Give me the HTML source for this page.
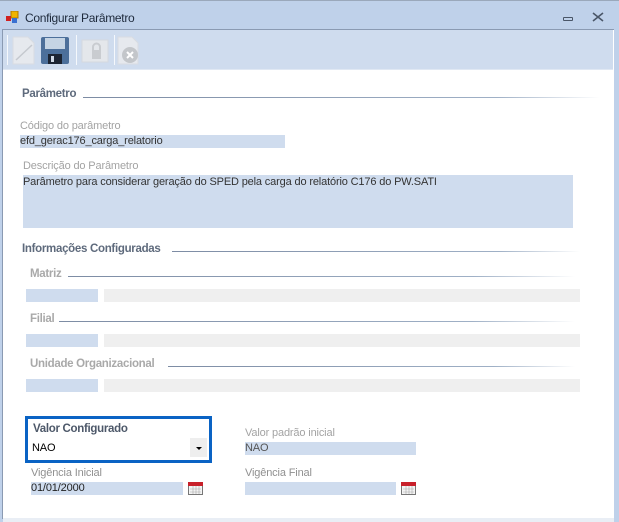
<!DOCTYPE html>
<html><head><meta charset="utf-8"><style>
*{margin:0;padding:0;box-sizing:border-box}
body{width:619px;height:522px;background:#bfd1ea;font-family:"Liberation Sans",sans-serif;font-size:11px;letter-spacing:-0.15px;position:relative;overflow:hidden;color:#000}
.a{position:absolute;white-space:nowrap}
.lbl{color:#a3a3a3}
.hd{font-weight:bold;color:#5e6a7c;font-size:11.5px;letter-spacing:-0.3px}
.hd2{font-weight:bold;color:#a9a9a9;font-size:11.5px;letter-spacing:-0.3px}
.ln{position:absolute;height:1px;background:linear-gradient(90deg,#7d8ca4,#9fb0c6 80%,rgba(255,255,255,0))}
.fb{position:absolute;background:#cfdcee}
.fg{position:absolute;background:#efefef}
</style></head><body>
<div class="a" style="left:0;top:0;width:619px;height:1px;background:#9aa8bb"></div>
<svg class="a" style="left:6px;top:11px" width="13" height="13"><rect x="5" y="0" width="7" height="7" fill="#f0b400" stroke="#b07800"/><rect x="0" y="5" width="5" height="5" fill="#d02020"/><rect x="6" y="7" width="5" height="5" fill="#3a70d0"/></svg>
<div class="a" style="left:25px;top:11px;color:#1e2a3c;font-size:12px;letter-spacing:-0.3px">Configurar Parâmetro</div>
<div class="a" style="left:563px;top:17px;width:10px;height:4px;border:1px solid #4a5668;border-radius:1px"></div>
<svg class="a" style="left:592px;top:12px" width="12" height="10"><path d="M1 1l10 8M11 1L1 9" stroke="#4a5668" stroke-width="1.6"/></svg>
<div class="a" style="left:2px;top:29px;width:612px;height:490px;background:#fff;border-left:1px solid #8a9ab2;border-top:1px solid #8a9ab2"></div>
<div class="a" style="left:3px;top:30px;width:610px;height:40px;background:#cfdcee;border-bottom:1px solid #e0e8f3"></div>
<div class="a" style="left:7px;top:35px;width:1px;height:30px;background:#f5f8fc"></div>
<svg class="a" style="left:12px;top:35px" width="24" height="30"><path d="M1 2h15l6 6v21H1z" fill="#e6e9ee" stroke="#d8dce2"/><path d="M4 25L20 10" stroke="#c5c9cf" stroke-width="1.5"/></svg>
<svg class="a" style="left:40px;top:35px" width="30" height="30"><rect x="1" y="2" width="28" height="27" rx="2" fill="#4c6f9a"/><rect x="5" y="3" width="20" height="11" fill="#c5d4e4"/><rect x="8" y="19" width="14" height="10" fill="#1c2432"/><rect x="11" y="21" width="3" height="6" fill="#cfd8e4"/></svg>
<div class="a" style="left:76px;top:35px;width:1px;height:30px;background:#f5f8fc"></div>
<svg class="a" style="left:81px;top:35px" width="28" height="30"><rect x="1" y="5" width="26" height="22" fill="#e4e7eb" stroke="#d5d9df"/><rect x="11" y="15" width="9" height="9" fill="#c9ccd0"/><path d="M12 15v-3a3.5 3.5 0 0 1 7 0v3" fill="none" stroke="#c9ccd0" stroke-width="2"/></svg>
<div class="a" style="left:114px;top:35px;width:1px;height:30px;background:#f5f8fc"></div>
<svg class="a" style="left:117px;top:35px" width="24" height="30"><path d="M1 2h14l6 6v21H1z" fill="#e6e9ee" stroke="#d8dce2"/><circle cx="13" cy="20" r="8" fill="#c3c6ca"/><path d="M10 17l6 6M16 17l-6 6" stroke="#fff" stroke-width="2"/></svg>
<div class="a hd" style="left:22px;top:88px">Parâmetro</div>
<div class="ln" style="left:83px;top:97px;width:517px"></div>
<div class="a lbl" style="left:20px;top:120px">Código do parâmetro</div>
<div class="fb" style="left:20px;top:135px;width:265px;height:13px"></div>
<div class="a" style="left:20px;top:135px;color:#333">efd_gerac176_carga_relatorio</div>
<div class="a lbl" style="left:23px;top:160px">Descrição do Parâmetro</div>
<div class="fb" style="left:23px;top:175px;width:550px;height:53px"></div>
<div class="a" style="left:23px;top:176px;color:#333">Parâmetro para considerar geração do SPED pela carga do relatório C176 do PW.SATI</div>
<div class="a hd" style="left:22px;top:243px">Informações Configuradas</div>
<div class="ln" style="left:172px;top:251px;width:408px"></div>
<div class="a hd2" style="left:30px;top:268px">Matriz</div>
<div class="ln" style="left:68px;top:276px;width:507px"></div>
<div class="fb" style="left:26px;top:289px;width:72px;height:13px"></div>
<div class="fg" style="left:104px;top:289px;width:476px;height:13px"></div>
<div class="a hd2" style="left:30px;top:313px">Filial</div>
<div class="ln" style="left:59px;top:321px;width:516px"></div>
<div class="fb" style="left:26px;top:334px;width:72px;height:13px"></div>
<div class="fg" style="left:104px;top:334px;width:476px;height:13px"></div>
<div class="a hd2" style="left:30px;top:358px">Unidade Organizacional</div>
<div class="ln" style="left:168px;top:366px;width:407px"></div>
<div class="fb" style="left:26px;top:379px;width:72px;height:13px"></div>
<div class="fg" style="left:104px;top:379px;width:476px;height:13px"></div>
<div class="a" style="left:25px;top:416px;width:187px;height:47px;border:3px solid #0a63c4"></div>
<div class="a hd" style="left:33px;top:423px;color:#4d5869">Valor Configurado</div>
<div class="a" style="left:32px;top:442px">NAO</div>
<div class="a" style="left:190px;top:438px;width:17px;height:19px;background:#eee"></div>
<div class="a" style="left:196px;top:447px;width:0;height:0;border-left:3px solid transparent;border-right:3px solid transparent;border-top:3px solid #000"></div>
<div class="a lbl" style="left:245px;top:427px">Valor padrão inicial</div>
<div class="fb" style="left:245px;top:442px;width:171px;height:13px"></div>
<div class="a" style="left:245px;top:442px;color:#555">NAO</div>
<div class="a lbl" style="left:31px;top:467px;color:#909090">Vigência Inicial</div>
<div class="fb" style="left:31px;top:482px;width:152px;height:13px"></div>
<div class="a" style="left:31px;top:482px;color:#222">01/01/2000</div>
<div class="a lbl" style="left:245px;top:467px;color:#909090">Vigência Final</div>
<div class="fb" style="left:245px;top:482px;width:151px;height:13px"></div>
<svg class="a" style="left:188px;top:480px" width="15" height="15"><rect x="0.5" y="2.5" width="14" height="12" fill="#f4f4f4" stroke="#777"/><rect x="0" y="2" width="15" height="4" fill="#c8202a"/><path d="M2 9h11M2 12h11M5 6v8M8 6v8M11 6v8" stroke="#aaa" stroke-width=".6"/></svg>
<svg class="a" style="left:401px;top:480px" width="15" height="15"><rect x="0.5" y="2.5" width="14" height="12" fill="#f4f4f4" stroke="#777"/><rect x="0" y="2" width="15" height="4" fill="#c8202a"/><path d="M2 9h11M2 12h11M5 6v8M8 6v8M11 6v8" stroke="#aaa" stroke-width=".6"/></svg>
<div class="a" style="left:3px;top:518px;width:611px;height:4px;background:#e9eef5"></div>
</body></html>
